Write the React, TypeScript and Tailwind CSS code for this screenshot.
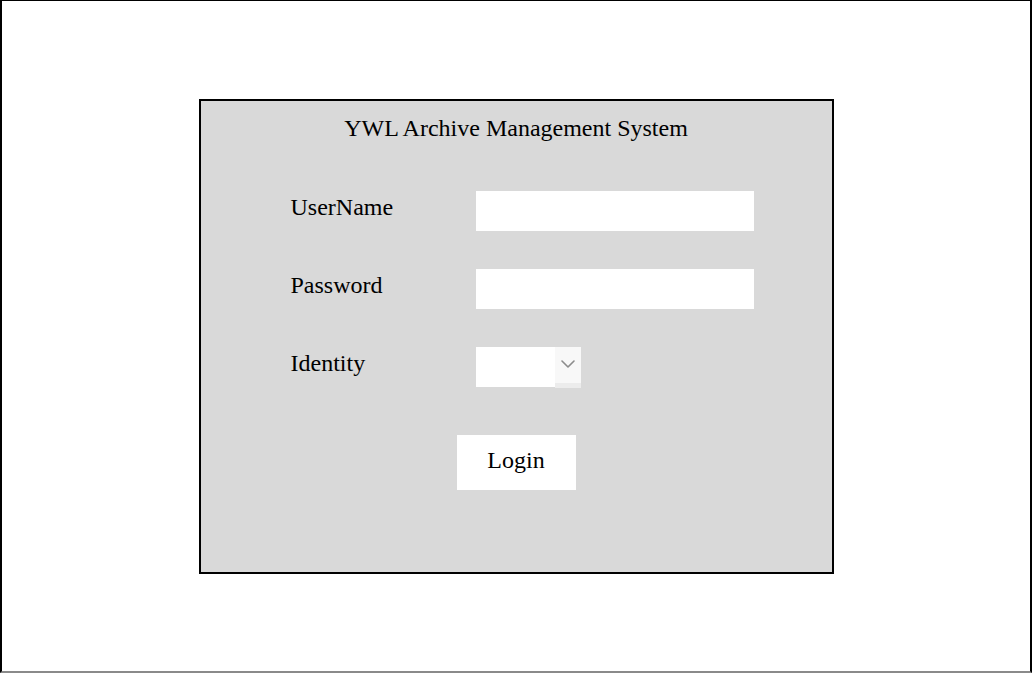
import React, { useState } from 'react'

export default function App() {
  const [userName, setUserName] = useState('')
  const [password, setPassword] = useState('')

  return (
    <div
      className="w-[1032px] h-[673px] flex justify-center pt-[98px] bg-white border-x-2 border-t border-b-2 border-t-black border-x-black border-b-[#8a8a8a]"
      style={{ fontFamily: '"Liberation Serif", "Times New Roman", serif' }}
    >
      <div className="w-[635px] h-[475px] bg-[#d9d9d9] border-2 border-black flex flex-col items-center text-black">
        <h1 className="pt-[13px] text-[24px] leading-[28px] font-normal">YWL Archive Management System</h1>

        <div className="mt-[49px] self-start pl-[89px] flex flex-col gap-[38px]">
          <Row label="UserName">
            <input
              value={userName}
              onChange={(e) => setUserName(e.target.value)}
              className="w-[278px] h-[40px] bg-white outline-none px-2 text-[20px]"
            />
          </Row>
          <Row label="Password">
            <input
              type="password"
              value={password}
              onChange={(e) => setPassword(e.target.value)}
              className="w-[278px] h-[40px] bg-white outline-none px-2 text-[20px]"
            />
          </Row>
          <Row label="Identity">
            <div className="flex h-[40px]">
              <div className="w-[79px] h-[40px] bg-white" />
              <div className="w-[26px] h-[41px] bg-[#f8f8f8] border-b-[5px] border-[#ececec] flex items-start justify-center pt-[13px]">
                <svg width="14" height="8" viewBox="0 0 14 8" fill="none">
                  <polyline points="1,1 7,7 13,1" stroke="#8c8c8c" strokeWidth="1.6" strokeLinecap="round" strokeLinejoin="round" />
                </svg>
              </div>
            </div>
          </Row>
        </div>

        <button className="mt-[48px] w-[119px] h-[55px] pb-[5px] bg-white text-[24px] leading-[28px] cursor-pointer">
          Login
        </button>
      </div>
    </div>
  )
}

function Row({ label, children }: { label: string; children: React.ReactNode }) {
  return (
    <div className="flex items-start h-[40px]">
      <label className="w-[186px] mt-[2px] pl-px text-[24px] leading-[28px]">{label}</label>
      {children}
    </div>
  )
}
